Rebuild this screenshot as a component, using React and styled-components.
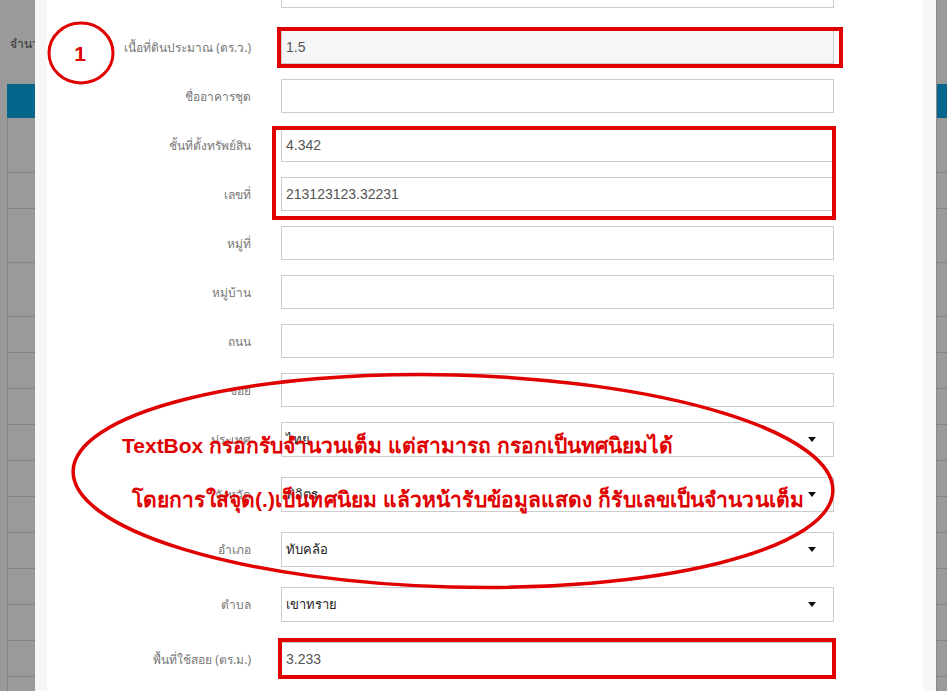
import React from 'react';
import styled, { createGlobalStyle } from 'styled-components';

const GlobalStyle = createGlobalStyle`
  html, body {
    margin: 0;
    padding: 0;
    overflow: hidden;
    background: #9a9a9a;
    font-family: Tahoma, "Noto Sans", "DejaVu Sans", sans-serif;
  }
`;

const backRows = [55, 36, 54, 54, 36, 36, 36, 36, 36, 36, 36, 36, 36, 36, 36, 36];

const BackPage = styled.div`
  height: 691px;
  padding-left: 7px;
  overflow: hidden;
`;

const BackTitle = styled.div`
  height: 84px;
  box-sizing: border-box;
  padding: 34px 0 0 3px;
  font-size: 12px;
  color: #333;
  white-space: nowrap;
`;

const BackHead = styled.div`
  height: 34px;
  background: #05658b;
`;

const BackRow = styled.div`
  height: ${({ h }) => h - 1}px;
  border-left: 1px solid #858585;
  border-bottom: 1px solid #858585;
`;

const Modal = styled.div`
  position: fixed;
  top: 0;
  bottom: 0;
  left: 35px;
  width: 876px;
  padding: 0 13px 0 12px;
  background: #f7f7f7;
  border-right: 1px solid #8a8a8a;
`;

const Panel = styled.div`
  height: 100%;
  background: #fff;
  overflow: hidden;
`;

const Form = styled.div`
  margin-top: -26px;
`;

const Row = styled.div`
  display: grid;
  grid-template-columns: 204px 553px;
  column-gap: 30px;
  align-items: center;
  margin-bottom: ${({ gap }) => gap}px;
`;

const Label = styled.label`
  text-align: right;
  font-size: 12px;
  color: #777;
  white-space: nowrap;
`;

const Field = styled.div`
  height: ${({ select }) => (select ? 35 : 34)}px;
  box-sizing: border-box;
  border: 1px solid #cccccc;
  background: ${({ disabled }) => (disabled ? '#f6f6f6' : '#fff')};
  display: flex;
  align-items: center;
  padding: 0 4px;
  font-size: ${({ select }) => (select ? 13 : 14)}px;
  font-family: "Liberation Sans", Arial, Tahoma, sans-serif;
  color: ${({ select }) => (select ? '#222' : '#555')};
`;

const Value = styled.span`
  flex: 1;
`;

const Caret = styled.span`
  width: 0;
  height: 0;
  margin-right: 13px;
  border-left: 4px solid transparent;
  border-right: 4px solid transparent;
  border-top: 5px solid #111;
`;

const Overlay = styled.div`
  position: fixed;
  inset: 0;
  pointer-events: none;
`;

const RedBox = styled.div`
  position: absolute;
  box-sizing: border-box;
  border: 4px solid #e00000;
`;

const Drawing = styled.svg`
  position: absolute;
  left: 0;
  top: 0;
`;

const Notes = styled.div`
  position: absolute;
  left: 122px;
  top: 433px;
  display: flex;
  flex-direction: column;
  gap: 28px;
  color: #e00000;
  font-weight: bold;
  font-size: 21px;
  line-height: 26px;
  font-family: Tahoma, "Liberation Sans", "Noto Sans", sans-serif;
  white-space: nowrap;
`;

const NoteLine = styled.div`
  padding-left: ${({ indent }) => indent || 0}px;
  letter-spacing: ${({ spread }) => spread || 0}px;
`;

const rows = [
  { label: '', gap: 22 },
  { label: 'เนื้อที่ดินประมาณ (ตร.ว.)', value: '1.5', disabled: true },
  { label: 'ชื่ออาคารชุด' },
  { label: 'ชั้นที่ตั้งทรัพย์สิน', value: '4.342' },
  { label: 'เลขที่', value: '213123123.32231' },
  { label: 'หมู่ที่' },
  { label: 'หมู่บ้าน' },
  { label: 'ถนน' },
  { label: 'ซอย' },
  { label: 'ประเทศ', value: 'ไทย', select: true },
  { label: 'จังหวัด', value: 'พิจิตร', select: true },
  { label: 'อำเภอ', value: 'ทับคล้อ', select: true },
  { label: 'ตำบล', value: 'เขาทราย', select: true },
  { label: 'พื้นที่ใช้สอย (ตร.ม.)', value: '3.233' },
];

export default function App() {
  return (
    <>
      <GlobalStyle />
      <BackPage>
        <BackTitle>จำนวน</BackTitle>
        <BackHead />
        {backRows.map((h, i) => (
          <BackRow key={i} h={h} />
        ))}
      </BackPage>

      <Modal>
        <Panel>
          <Form>
            {rows.map((r, i) => (
              <Row key={i} gap={r.gap ?? (r.select ? 20 : 15)}>
                <Label>{r.label}</Label>
                <Field select={r.select} disabled={r.disabled}>
                  <Value>{r.value}</Value>
                  {r.select && <Caret />}
                </Field>
              </Row>
            ))}
          </Form>
        </Panel>
      </Modal>

      <Overlay>
        <RedBox style={{ left: 277, top: 27, width: 566, height: 41 }} />
        <RedBox style={{ left: 272, top: 126, width: 564, height: 94 }} />
        <RedBox style={{ left: 278, top: 638, width: 558, height: 41 }} />
        <Drawing width="947" height="691" viewBox="0 0 947 691">
          <ellipse cx="81" cy="53" rx="32" ry="30" fill="none" stroke="#e00000" strokeWidth="3" />
          <text x="80" y="61" textAnchor="middle" fill="#e00000" fontSize="21" fontWeight="bold" fontFamily="Tahoma, 'Liberation Sans', sans-serif">1</text>
          <ellipse cx="453" cy="481" rx="380" ry="106" fill="none" stroke="#e00000" strokeWidth="3.5" transform="rotate(1.5 453 481)" />
        </Drawing>
        <Notes>
          <NoteLine>TextBox กรอกรับจำนวนเต็ม แต่สามารถ กรอกเป็นทศนิยมได้</NoteLine>
          <NoteLine indent={10} spread={0.1}>โดยการใส่จุด(.)เป็นทศนิยม แล้วหน้ารับข้อมูลแสดง ก็รับเลขเป็นจำนวนเต็ม</NoteLine>
        </Notes>
      </Overlay>
    </>
  );
}
